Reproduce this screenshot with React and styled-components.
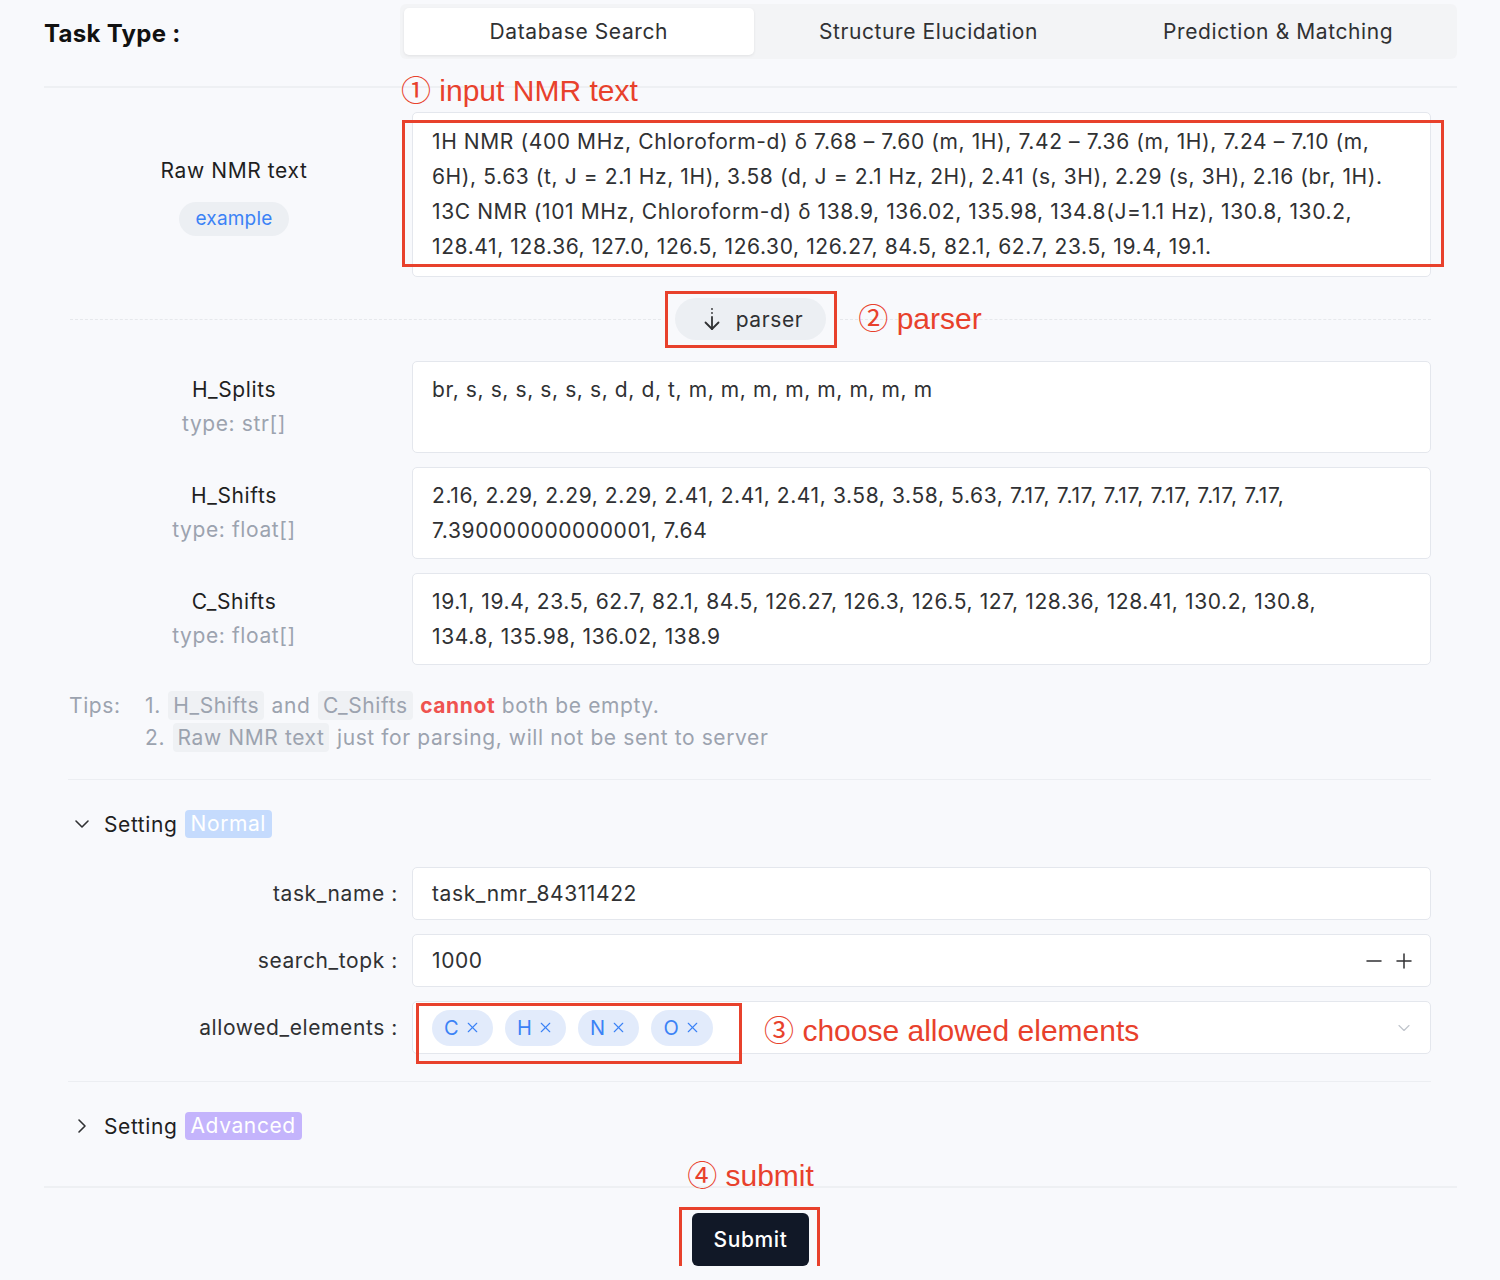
import React from "react";
import styled, { createGlobalStyle, css } from "styled-components";
import { ChevronDown, ChevronRight, Minus, Plus, X } from "lucide-react";

const GlobalStyle = createGlobalStyle`
  html, body {
    margin: 0;
    padding: 0;
    background: #f8f9fc;
  }
  body {
    font-family: Inter, "Noto Sans", "Liberation Sans", sans-serif;
    color: #303133;
  }
  * {
    box-sizing: border-box;
  }
`;

const RED = "#e8412c";

// the reference font runs wider than Inter, so every body text gets a little tracking
const bodyText = css`
  font-size: 21px;
  letter-spacing: 0.6px;
`;

const TABS = ["Database Search", "Structure Elucidation", "Prediction & Matching"];

const RAW_LINES = [
  "1H NMR (400 MHz, Chloroform-d) δ 7.68 – 7.60 (m, 1H), 7.42 – 7.36 (m, 1H), 7.24 – 7.10 (m,",
  "6H), 5.63 (t, J = 2.1 Hz, 1H), 3.58 (d, J = 2.1 Hz, 2H), 2.41 (s, 3H), 2.29 (s, 3H), 2.16 (br, 1H).",
  "13C NMR (101 MHz, Chloroform-d) δ 138.9, 136.02, 135.98, 134.8(J=1.1 Hz), 130.8, 130.2,",
  "128.41, 128.36, 127.0, 126.5, 126.30, 126.27, 84.5, 82.1, 62.7, 23.5, 19.4, 19.1.",
];

const PARSED = [
  {
    id: "H_Splits",
    type: "type: str[]",
    lines: ["br, s, s, s, s, s, s, d, d, t, m, m, m, m, m, m, m, m"],
  },
  {
    id: "H_Shifts",
    type: "type: float[]",
    lines: [
      "2.16, 2.29, 2.29, 2.29, 2.41, 2.41, 2.41, 3.58, 3.58, 5.63, 7.17, 7.17, 7.17, 7.17, 7.17, 7.17,",
      "7.390000000000001, 7.64",
    ],
  },
  {
    id: "C_Shifts",
    type: "type: float[]",
    lines: [
      "19.1, 19.4, 23.5, 62.7, 82.1, 84.5, 126.27, 126.3, 126.5, 127, 128.36, 128.41, 130.2, 130.8,",
      "134.8, 135.98, 136.02, 138.9",
    ],
  },
];

const ELEMENTS = ["C", "H", "N", "O"];

const ParserIcon = () => (
  <svg width="24" height="26" viewBox="0 0 24 26" fill="none" stroke="#303133" strokeWidth="1.8" strokeLinecap="round" strokeLinejoin="round">
    <line x1="12" y1="3" x2="12" y2="3.1" />
    <line x1="12" y1="7" x2="12" y2="7.1" />
    <line x1="12" y1="11" x2="12" y2="23" />
    <polyline points="5.5,16.5 12,23 18.5,16.5" />
  </svg>
);

const App = () => {
  return (
    <>
      <GlobalStyle />
      <Page>
        <Header>
          <TaskLabel>Task Type :</TaskLabel>
          <Tabs>
            {TABS.map((tab, i) => (
              <Tab key={tab} active={i === 0}>
                {tab}
              </Tab>
            ))}
          </Tabs>
        </Header>

        <Form>
          <RawRow>
            <FieldLabel>
              <LabelName>Raw NMR text</LabelName>
              <ExampleButton>example</ExampleButton>
            </FieldLabel>
            <FieldBox rows={4} tall>
              {RAW_LINES.map((line) => (
                <Line key={line}>{line}</Line>
              ))}
              <Note top="-40px" left="-12px">① input NMR text</Note>
              <RedBox style={{ left: -11, top: 7, width: 1042, height: 147 }} />
            </FieldBox>
          </RawRow>

          <ParserRow>
            <DashLine />
            <ParserButton>
              <ParserIcon />
              parser
              <RedBox style={{ left: -10, top: -7, width: 172, height: 57 }} />
              <Note top="3px" left="calc(100% + 32px)">② parser</Note>
            </ParserButton>
            <DashLine />
          </ParserRow>

          <FieldList>
            {PARSED.map(({ id, type, lines }) => (
              <FieldRow key={id}>
                <FieldLabel>
                  <LabelName>{id}</LabelName>
                  <LabelType>{type}</LabelType>
                </FieldLabel>
                <FieldBox rows={2}>
                  {lines.map((line) => (
                    <Line key={line}>{line}</Line>
                  ))}
                </FieldBox>
              </FieldRow>
            ))}
          </FieldList>

          <Tips>
            <div>Tips:</div>
            <TipsList>
              <TipItem>
                1. <Code>H_Shifts</Code> and <Code>C_Shifts</Code> <Danger>cannot</Danger> both be empty.
              </TipItem>
              <TipItem>
                2. <Code>Raw NMR text</Code> just for parsing, will not be sent to server
              </TipItem>
            </TipsList>
          </Tips>

          <Divider space={25} />

          <CollapseHeader>
            <ChevronDown size={24} strokeWidth={1.6} color="#303133" />
            Setting
            <Badge tone="normal">Normal</Badge>
          </CollapseHeader>

          <SettingList>
            <SettingRow>
              <SettingLabel>task_name :</SettingLabel>
              <InputBox>task_nmr_84311422</InputBox>
            </SettingRow>
            <SettingRow>
              <SettingLabel>search_topk :</SettingLabel>
              <InputBox>
                <span>1000</span>
                <Stepper>
                  <Minus size={24} strokeWidth={1.5} />
                  <Plus size={24} strokeWidth={1.5} />
                </Stepper>
              </InputBox>
            </SettingRow>
            <SettingRow>
              <SettingLabel>allowed_elements :</SettingLabel>
              <InputBox>
                <TagList>
                  {ELEMENTS.map((el) => (
                    <Tag key={el}>
                      {el}
                      <X size={17} strokeWidth={1.6} />
                    </Tag>
                  ))}
                  <RedBox style={{ left: -16, top: -7, width: 326, height: 61 }} />
                </TagList>
                <SelectNote>③ choose allowed elements</SelectNote>
                <ChevronDown size={20} strokeWidth={1.4} color="#c0c4cc" />
              </InputBox>
            </SettingRow>
          </SettingList>

          <Divider space={27} />

          <CollapseHeader>
            <ChevronRight size={24} strokeWidth={1.6} color="#303133" />
            Setting
            <Badge tone="advanced">Advanced</Badge>
          </CollapseHeader>
        </Form>

        <Footer>
          <SubmitButton>
            Submit
            <Note top="-55px" left="50%" center>④ submit</Note>
            <RedBox style={{ left: -13, top: -6, width: 141, height: 65 }} />
          </SubmitButton>
        </Footer>
      </Page>
    </>
  );
};

const Page = styled.div`
  width: 1413px;
  margin-left: 44px;
`;

const Header = styled.div`
  display: grid;
  grid-template-columns: 356px 1fr;
  align-items: center;
  padding: 4px 0 27px;
  border-bottom: 2px solid #eef0f3;
`;

const TaskLabel = styled.div`
  font-size: 24px;
  letter-spacing: 0.3px;
  font-weight: 700;
  color: #111;
  padding-top: 3px;
`;

const Tabs = styled.div`
  display: grid;
  grid-template-columns: repeat(3, 1fr);
  padding: 4px;
  background: #f3f4f6;
  border-radius: 6px;
`;

const Tab = styled.div`
  ${bodyText};
  height: 47px;
  display: flex;
  align-items: center;
  justify-content: center;
  color: #303133;
  border-radius: 5px;
  background: ${({ active }) => (active ? "#fff" : "transparent")};
  box-shadow: ${({ active }) => (active ? "0 1px 3px rgba(0, 0, 0, 0.08)" : "none")};
`;

const Form = styled.div`
  padding: 0 26px 0 24px;
`;

const FieldRow = styled.div`
  display: grid;
  grid-template-columns: 332px 1fr;
  column-gap: 12px;
  align-items: center;
`;

const RawRow = styled(FieldRow)`
  margin-top: 24px;
`;

const FieldLabel = styled.div`
  ${bodyText};
  display: flex;
  flex-direction: column;
  align-items: center;
  line-height: 34px;
`;

const LabelName = styled.div`
  color: #1f1f1f;
`;

const LabelType = styled.div`
  color: #9ca3af;
`;

const ExampleButton = styled.div`
  margin-top: 14px;
  height: 34px;
  padding: 0 16px;
  border-radius: 17px;
  background: #eceff3;
  color: #3b82f6;
  font-size: 19px;
  letter-spacing: 0.2px;
  line-height: 34px;
`;

const FieldBox = styled.div`
  ${bodyText};
  position: relative;
  min-height: ${({ rows }) => rows * 35 + 22}px;
  padding: ${({ tall }) => (tall ? "11px 19px 12px" : "10px 19px 10px")};
  background: #fff;
  border: 1px solid #e4e7ed;
  border-radius: 5px;
  line-height: 35px;
  color: #303133;
`;

const Line = styled.div`
  white-space: nowrap;
`;

const noteFont = css`
  font-family: "Liberation Sans", "Noto Sans CJK SC", "DejaVu Sans", sans-serif;
  font-size: 30px;
  letter-spacing: 0;
  color: ${RED};
  white-space: nowrap;
  font-weight: 400;
`;

const Note = styled.div`
  ${noteFont};
  position: absolute;
  top: ${({ top }) => top};
  left: ${({ left }) => left};
  transform: ${({ center }) => (center ? "translateX(-50%)" : "none")};
  line-height: 36px;
`;

const RedBox = styled.div`
  position: absolute;
  border: 3px solid ${RED};
  pointer-events: none;
`;

const ParserRow = styled.div`
  display: flex;
  align-items: center;
  gap: 14px;
  height: 84px;
  padding-left: 2px;
`;

const DashLine = styled.div`
  flex: 1;
  border-top: 1px dashed #e6e8ec;
`;

const ParserButton = styled.div`
  ${bodyText};
  position: relative;
  display: flex;
  align-items: center;
  gap: 12px;
  height: 42px;
  padding: 0 23px 0 25px;
  border-radius: 21px;
  background: #eceff3;
  color: #303133;
`;

const FieldList = styled.div`
  display: flex;
  flex-direction: column;
  gap: 14px;
`;

const Tips = styled.div`
  ${bodyText};
  display: grid;
  grid-template-columns: 76px 1fr;
  margin-top: 25px;
  padding-left: 1px;
  line-height: 32px;
  color: #9ca3af;
`;

const TipsList = styled.div`
  display: flex;
  flex-direction: column;
`;

const TipItem = styled.div`
  white-space: nowrap;
`;

const Code = styled.span`
  padding: 2px 5px;
  margin: 0 1px;
  border-radius: 4px;
  background: #eff1f4;
`;

const Danger = styled.span`
  color: #ef5350;
  font-weight: 700;
`;

const Divider = styled.div`
  margin-top: ${({ space }) => space}px;
  border-top: 1px solid #eceef2;
`;

const CollapseHeader = styled.div`
  ${bodyText};
  display: flex;
  align-items: center;
  gap: 8px;
  height: 34px;
  margin: 27px 0 26px;
  padding-left: 2px;
  color: #1f1f1f;

  & > svg {
    margin-right: 2px;
  }
`;

const Badge = styled.span`
  margin-left: -1px;
  padding: 0 6px;
  height: 28px;
  line-height: 28px;
  border-radius: 4px;
  color: #fff;
  background: ${({ tone }) => (tone === "advanced" ? "#c4b4fc" : "#c5dbfd")};
`;

const SettingList = styled.div`
  display: flex;
  flex-direction: column;
  gap: 14px;
`;

const SettingRow = styled.div`
  display: grid;
  grid-template-columns: 332px 1fr;
  column-gap: 12px;
  align-items: center;
`;

const SettingLabel = styled.div`
  ${bodyText};
  text-align: right;
  color: #303133;
  padding-right: 2px;
`;

const InputBox = styled.div`
  ${bodyText};
  display: flex;
  align-items: center;
  height: 53px;
  padding: 0 18px 0 19px;
  background: #fff;
  border: 1px solid #e4e7ed;
  border-radius: 5px;
  color: #303133;

  & > span {
    flex: 1;
  }
  & > svg {
    margin-left: auto;
    margin-right: -2px;
  }
`;

const Stepper = styled.div`
  display: flex;
  align-items: center;
  gap: 6px;
  margin-right: -4px;
  color: #303133;
`;

const TagList = styled.div`
  position: relative;
  display: flex;
  gap: 12px;
`;

const Tag = styled.div`
  display: flex;
  align-items: center;
  gap: 5px;
  height: 36px;
  padding: 0 12px;
  border-radius: 18px;
  background: #e2ebfb;
  color: #3b82f6;
  font-size: 20px;
  letter-spacing: 0.3px;
`;

const SelectNote = styled.div`
  ${noteFont};
  margin-left: 51px;
`;

const Footer = styled.div`
  display: flex;
  justify-content: center;
  margin-top: 43px;
  padding-top: 25px;
  border-top: 2px solid #eef0f3;
`;

const SubmitButton = styled.div`
  ${bodyText};
  position: relative;
  display: flex;
  align-items: center;
  justify-content: center;
  width: 117px;
  height: 53px;
  border-radius: 6px;
  background: #111827;
  color: #fff;
  font-weight: 500;
`;

export default App;
